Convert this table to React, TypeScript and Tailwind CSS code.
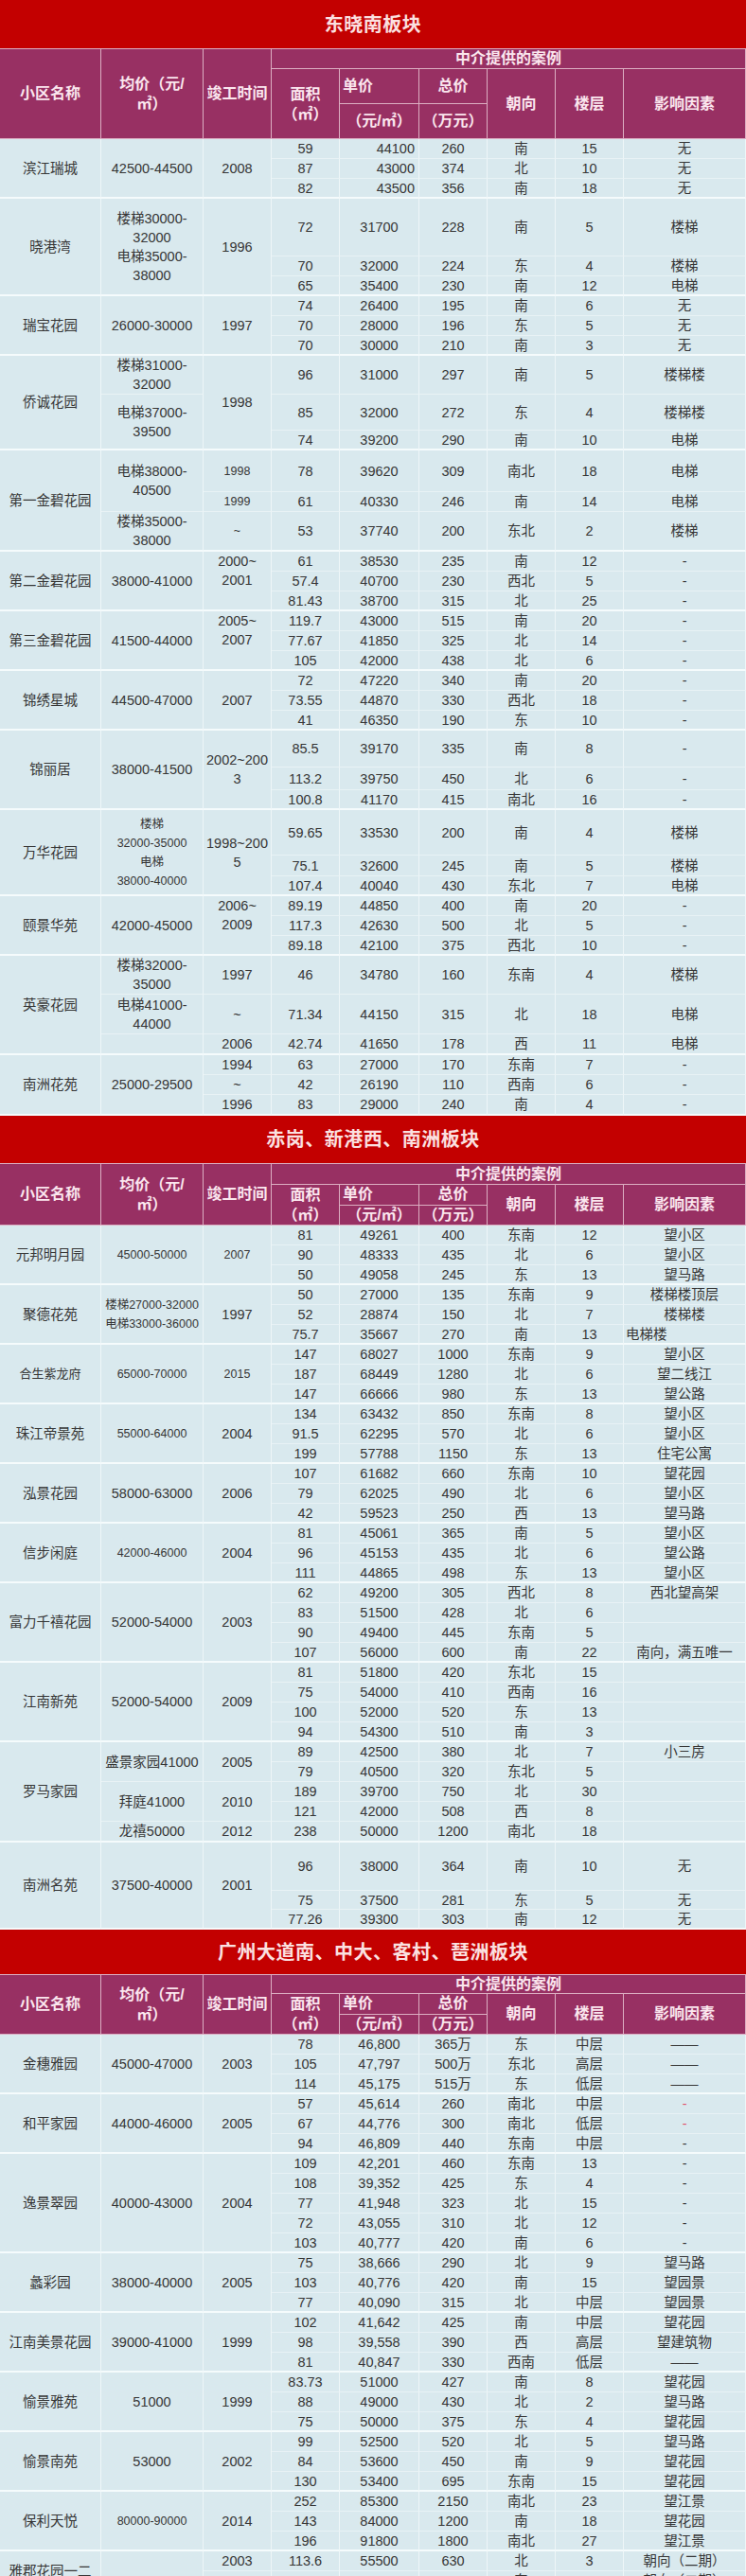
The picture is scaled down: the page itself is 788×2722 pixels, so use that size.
import React from "react";

type Row = [number, string, string, string, string, string, string?];
type Span = { n: number; lines: string[]; small?: boolean; top?: boolean };
type Group = {
  name: string[];
  nameSmall?: boolean;
  price: Span[];
  built: Span[];
  rows: Row[];
  uRight?: boolean;
  eLeft?: number[];
  eRed?: number[];
};
type Section = {
  title: string;
  titleH: number;
  head: [number, number, number];
  groups: Group[];
};

const one = (text: string, n = 3, small = false): Span[] => [{ n, lines: [text], small }];

const sections: Section[] = [
  {
    title: "东晓南板块",
    titleH: 52,
    head: [21, 37, 37],
    groups: [
      {
        name: ["滨江瑞城"],
        price: one("42500-44500"),
        built: one("2008"),
        uRight: true,
        rows: [
          [21, "59", "44100", "260", "南", "15", "无"],
          [21, "87", "43000", "374", "北", "10", "无"],
          [21, "82", "43500", "356", "南", "18", "无"],
        ],
      },
      {
        name: ["晓港湾"],
        price: [{ n: 3, lines: ["楼梯30000-", "32000", "电梯35000-", "38000"] }],
        built: one("1996"),
        rows: [
          [61, "72", "31700", "228", "南", "5", "楼梯"],
          [21, "70", "32000", "224", "东", "4", "楼梯"],
          [21, "65", "35400", "230", "南", "12", "电梯"],
        ],
      },
      {
        name: ["瑞宝花园"],
        price: one("26000-30000"),
        built: one("1997"),
        rows: [
          [21, "74", "26400", "195", "南", "6", "无"],
          [21, "70", "28000", "196", "东", "5", "无"],
          [21, "70", "30000", "210", "南", "3", "无"],
        ],
      },
      {
        name: ["侨诚花园"],
        price: [
          { n: 1, lines: ["楼梯31000-", "32000"] },
          { n: 2, lines: ["电梯37000-", "39500"] },
        ],
        built: one("1998"),
        rows: [
          [41, "96", "31000", "297", "南", "5", "楼梯楼"],
          [38, "85", "32000", "272", "东", "4", "楼梯楼"],
          [21, "74", "39200", "290", "南", "10", "电梯"],
        ],
      },
      {
        name: ["第一金碧花园"],
        price: [
          { n: 2, lines: ["电梯38000-", "40500"] },
          { n: 1, lines: ["楼梯35000-", "38000"] },
        ],
        built: [
          { n: 1, lines: ["1998"], small: true },
          { n: 1, lines: ["1999"], small: true },
          { n: 1, lines: ["~"], small: true },
        ],
        rows: [
          [44, "78", "39620", "309", "南北", "18", "电梯"],
          [21, "61", "40330", "246", "南", "14", "电梯"],
          [42, "53", "37740", "200", "东北", "2", "楼梯"],
        ],
      },
      {
        name: ["第二金碧花园"],
        price: one("38000-41000"),
        built: [{ n: 3, lines: ["2000~", "2001"], top: true }],
        rows: [
          [21, "61", "38530", "235", "南", "12", "-"],
          [21, "57.4", "40700", "230", "西北", "5", "-"],
          [21, "81.43", "38700", "315", "北", "25", "-"],
        ],
      },
      {
        name: ["第三金碧花园"],
        price: one("41500-44000"),
        built: [{ n: 3, lines: ["2005~", "2007"], top: true }],
        rows: [
          [21, "119.7", "43000", "515", "南", "20", "-"],
          [21, "77.67", "41850", "325", "北", "14", "-"],
          [21, "105", "42000", "438", "北", "6", "-"],
        ],
      },
      {
        name: ["锦绣星城"],
        price: one("44500-47000"),
        built: one("2007"),
        rows: [
          [21, "72", "47220", "340", "南", "20", "-"],
          [21, "73.55", "44870", "330", "西北", "18", "-"],
          [21, "41", "46350", "190", "东", "10", "-"],
        ],
      },
      {
        name: ["锦丽居"],
        price: one("38000-41500"),
        built: [{ n: 3, lines: ["2002~200", "3"] }],
        rows: [
          [39, "85.5", "39170", "335", "南", "8", "-"],
          [24, "113.2", "39750", "450", "北", "6", "-"],
          [21, "100.8", "41170", "415", "南北", "16", "-"],
        ],
      },
      {
        name: ["万华花园"],
        price: [{ n: 3, lines: ["楼梯", "32000-35000", "电梯", "38000-40000"], small: true }],
        built: [{ n: 3, lines: ["1998~200", "5"] }],
        rows: [
          [48, "59.65", "33530", "200", "南", "4", "楼梯"],
          [22, "75.1", "32600", "245", "南", "5", "楼梯"],
          [21, "107.4", "40040", "430", "东北", "7", "电梯"],
        ],
      },
      {
        name: ["颐景华苑"],
        price: one("42000-45000"),
        built: [{ n: 3, lines: ["2006~", "2009"], top: true }],
        rows: [
          [21, "89.19", "44850", "400", "南", "20", "-"],
          [21, "117.3", "42630", "500", "北", "5", "-"],
          [21, "89.18", "42100", "375", "西北", "10", "-"],
        ],
      },
      {
        name: ["英豪花园"],
        price: [
          { n: 1, lines: ["楼梯32000-", "35000"] },
          { n: 1, lines: ["电梯41000-", "44000"] },
          { n: 1, lines: [] },
        ],
        built: [
          { n: 1, lines: ["1997"] },
          { n: 1, lines: ["~"] },
          { n: 1, lines: ["2006"] },
        ],
        rows: [
          [41, "46", "34780", "160", "东南", "4", "楼梯"],
          [42, "71.34", "44150", "315", "北", "18", "电梯"],
          [21, "42.74", "41650", "178", "西", "11", "电梯"],
        ],
      },
      {
        name: ["南洲花苑"],
        price: one("25000-29500"),
        built: [
          { n: 1, lines: ["1994"] },
          { n: 1, lines: ["~"] },
          { n: 1, lines: ["1996"] },
        ],
        rows: [
          [21, "63", "27000", "170", "东南", "7", "-"],
          [21, "42", "26190", "110", "西南", "6", "-"],
          [21, "83", "29000", "240", "南", "4", "-"],
        ],
      },
    ],
  },
  {
    title: "赤岗、新港西、南洲板块",
    titleH: 51,
    head: [22, 21, 21],
    groups: [
      {
        name: ["元邦明月园"],
        price: one("45000-50000", 3, true),
        built: one("2007", 3, true),
        rows: [
          [21, "81", "49261", "400", "东南", "12", "望小区"],
          [21, "90", "48333", "435", "北", "6", "望小区"],
          [21, "50", "49058", "245", "东", "13", "望马路"],
        ],
      },
      {
        name: ["聚德花苑"],
        price: [{ n: 3, lines: ["楼梯27000-32000", "电梯33000-36000"], small: true }],
        built: one("1997"),
        eLeft: [2],
        rows: [
          [21, "50", "27000", "135", "东南", "9", "楼梯楼顶层"],
          [21, "52", "28874", "150", "北", "7", "楼梯楼"],
          [21, "75.7", "35667", "270", "南", "13", "电梯楼"],
        ],
      },
      {
        name: ["合生紫龙府"],
        nameSmall: true,
        price: one("65000-70000", 3, true),
        built: one("2015", 3, true),
        rows: [
          [21, "147", "68027", "1000", "东南", "9", "望小区"],
          [21, "187", "68449", "1280", "北", "6", "望二线江"],
          [21, "147", "66666", "980", "东", "13", "望公路"],
        ],
      },
      {
        name: ["珠江帝景苑"],
        price: one("55000-64000", 3, true),
        built: one("2004"),
        rows: [
          [21, "134", "63432", "850", "东南", "8", "望小区"],
          [21, "91.5", "62295", "570", "北", "6", "望小区"],
          [21, "199", "57788", "1150", "东", "13", "住宅公寓"],
        ],
      },
      {
        name: ["泓景花园"],
        price: one("58000-63000"),
        built: one("2006"),
        rows: [
          [21, "107", "61682", "660", "东南", "10", "望花园"],
          [21, "79", "62025", "490", "北", "6", "望小区"],
          [21, "42", "59523", "250", "西", "13", "望马路"],
        ],
      },
      {
        name: ["信步闲庭"],
        price: one("42000-46000", 3, true),
        built: one("2004"),
        rows: [
          [21, "81", "45061", "365", "南", "5", "望小区"],
          [21, "96", "45153", "435", "北", "6", "望公路"],
          [21, "111", "44865", "498", "东", "13", "望小区"],
        ],
      },
      {
        name: ["富力千禧花园"],
        price: one("52000-54000", 4),
        built: one("2003", 4),
        rows: [
          [21, "62", "49200", "305", "西北", "8", "西北望高架"],
          [21, "83", "51500", "428", "北", "6", ""],
          [21, "90", "49400", "445", "东南", "5", ""],
          [21, "107", "56000", "600", "南", "22", "南向，满五唯一"],
        ],
      },
      {
        name: ["江南新苑"],
        price: one("52000-54000", 4),
        built: one("2009", 4),
        rows: [
          [21, "81", "51800", "420", "东北", "15", ""],
          [21, "75", "54000", "410", "西南", "16", ""],
          [21, "100", "52000", "520", "东", "13", ""],
          [21, "94", "54300", "510", "南", "3", ""],
        ],
      },
      {
        name: ["罗马家园"],
        price: [
          { n: 2, lines: ["盛景家园41000"] },
          { n: 2, lines: ["拜庭41000"] },
          { n: 1, lines: ["龙禧50000"] },
        ],
        built: [
          { n: 2, lines: ["2005"] },
          { n: 2, lines: ["2010"] },
          { n: 1, lines: ["2012"] },
        ],
        rows: [
          [21, "89", "42500", "380", "北", "7", "小三房"],
          [21, "79", "40500", "320", "东北", "5", ""],
          [21, "189", "39700", "750", "北", "30", ""],
          [21, "121", "42000", "508", "西", "8", ""],
          [21, "238", "50000", "1200", "南北", "18", ""],
        ],
      },
      {
        name: ["南洲名苑"],
        price: one("37500-40000"),
        built: one("2001"),
        rows: [
          [51, "96", "38000", "364", "南", "10", "无"],
          [20, "75", "37500", "281", "东", "5", "无"],
          [21, "77.26", "39300", "303", "南", "12", "无"],
        ],
      },
    ],
  },
  {
    title: "广州大道南、中大、客村、琶洲板块",
    titleH: 48,
    head: [20, 21, 21],
    groups: [
      {
        name: ["金穗雅园"],
        price: one("45000-47000"),
        built: one("2003"),
        rows: [
          [21, "78", "46,800", "365万", "东", "中层", "——"],
          [21, "105", "47,797", "500万", "东北", "高层", "——"],
          [21, "114", "45,175", "515万", "东", "低层", "——"],
        ],
      },
      {
        name: ["和平家园"],
        price: one("44000-46000"),
        built: one("2005"),
        eRed: [0, 1],
        rows: [
          [21, "57", "45,614", "260", "南北", "中层", "-"],
          [21, "67", "44,776", "300", "南北", "低层", "-"],
          [21, "94", "46,809", "440", "东南", "中层", "-"],
        ],
      },
      {
        name: ["逸景翠园"],
        price: one("40000-43000", 5),
        built: one("2004", 5),
        rows: [
          [21, "109", "42,201", "460", "东南", "13", "-"],
          [21, "108", "39,352", "425", "东", "4", "-"],
          [21, "77", "41,948", "323", "北", "15", "-"],
          [21, "72", "43,055", "310", "北", "12", "-"],
          [21, "103", "40,777", "420", "南", "6", "-"],
        ],
      },
      {
        name: ["蠡彩园"],
        price: one("38000-40000"),
        built: one("2005"),
        rows: [
          [21, "75", "38,666", "290", "北", "9", "望马路"],
          [21, "103", "40,776", "420", "南", "15", "望园景"],
          [21, "77", "40,090", "315", "北", "中层", "望园景"],
        ],
      },
      {
        name: ["江南美景花园"],
        price: one("39000-41000"),
        built: one("1999"),
        rows: [
          [21, "102", "41,642", "425", "南", "中层", "望花园"],
          [21, "98", "39,558", "390", "西", "高层", "望建筑物"],
          [21, "81", "40,847", "330", "西南", "低层", "——"],
        ],
      },
      {
        name: ["愉景雅苑"],
        price: one("51000"),
        built: one("1999"),
        rows: [
          [21, "83.73", "51000", "427", "南", "8", "望花园"],
          [21, "88", "49000", "430", "北", "2", "望马路"],
          [21, "75", "50000", "375", "东", "4", "望花园"],
        ],
      },
      {
        name: ["愉景南苑"],
        price: one("53000"),
        built: one("2002"),
        rows: [
          [21, "99", "52500", "520", "北", "5", "望马路"],
          [21, "84", "53600", "450", "南", "9", "望花园"],
          [21, "130", "53400", "695", "东南", "15", "望花园"],
        ],
      },
      {
        name: ["保利天悦"],
        price: one("80000-90000", 3, true),
        built: one("2014"),
        rows: [
          [21, "252", "85300", "2150", "南北", "23", "望江景"],
          [21, "143", "84000", "1200", "南", "18", "望花园"],
          [21, "196", "91800", "1800", "南北", "27", "望江景"],
        ],
      },
      {
        name: ["雅郡花园一二", "期"],
        price: one("56000-63000"),
        built: [
          { n: 1, lines: ["2003"] },
          { n: 2, lines: [] },
        ],
        rows: [
          [21, "113.6", "55500", "630", "北", "3", "朝向（二期）"],
          [21, "120", "58000", "700", "东", "5", "朝向（二期）"],
          [21, "", "", "", "", "", ""],
        ],
      },
    ],
  },
];

const headCell =
  "p-0 text-center align-middle border-r border-b border-[#dcaec2] font-bold text-[16px] leading-[18px] text-[#fbe6ee]";

function bottom(last: boolean) {
  return last ? "border-b-2 border-b-[#f5fbfc]" : "border-b border-b-[#e8f2f5]";
}

function SpanCell({ s, last }: { s: Span; last: boolean }) {
  return (
    <td
      rowSpan={s.n}
      className={`p-0 text-center border-r border-r-[#eef6f8] leading-[20px] ${bottom(last)} ${
        s.top ? "align-top" : "align-middle"
      } ${s.small ? "text-[12.5px]" : "text-[14.5px]"}`}
    >
      {s.lines.map((l, i) => (
        <div key={i}>{l}</div>
      ))}
    </td>
  );
}

function Header({ s }: { s: Section }) {
  return (
    <>
      <tr style={{ height: s.titleH }}>
        <td
          colSpan={9}
          className="p-0 text-center align-middle bg-[#c30000] border-b border-[#dcaec2] text-[20px] leading-[24px] font-bold text-[#fbe0e0] tracking-[0.5px]"
        >
          {s.title}
        </td>
      </tr>
      <tr style={{ height: s.head[0] }} className="bg-[#983063]">
        <td rowSpan={3} className={headCell}>
          小区名称
        </td>
        <td rowSpan={3} className={`${headCell} !leading-[21px]`}>
          <div>均价（元/</div>
          <div>㎡）</div>
        </td>
        <td rowSpan={3} className={headCell}>
          竣工时间
        </td>
        <td colSpan={6} className={headCell}>
          中介提供的案例
        </td>
      </tr>
      <tr style={{ height: s.head[1] }} className="bg-[#983063]">
        <td rowSpan={2} className={`${headCell} !leading-[21px]`}>
          <div>面积</div>
          <div>（㎡）</div>
        </td>
        <td className={`${headCell} !text-left pl-[3px]`}>单价</td>
        <td className={headCell}>总价</td>
        <td rowSpan={2} className={headCell}>
          朝向
        </td>
        <td rowSpan={2} className={headCell}>
          楼层
        </td>
        <td rowSpan={2} className={headCell}>
          影响因素
        </td>
      </tr>
      <tr style={{ height: s.head[2] }} className="bg-[#983063]">
        <td className={headCell}>（元/㎡）</td>
        <td className={headCell}>（万元）</td>
      </tr>
    </>
  );
}

function GroupRows({ g }: { g: Group }) {
  const n = g.rows.length;
  const startMap = (spans: Span[]) => {
    const m: Record<number, Span> = {};
    let acc = 0;
    spans.forEach((sp) => {
      m[acc] = sp;
      acc += sp.n;
    });
    return m;
  };
  const pm = startMap(g.price);
  const bm = startMap(g.built);

  return (
    <>
      {g.rows.map((r, i) => {
        const last = i === n - 1;
        const c = `p-0 text-center align-middle border-r border-r-[#eef6f8] leading-[18px] text-[14.5px] ${bottom(last)}`;
        const p = pm[i];
        const b = bm[i];
        return (
          <tr key={i} style={{ height: r[0] }}>
            {i === 0 && (
              <td
                rowSpan={n}
                className={`p-0 text-center align-middle border-r border-r-[#eef6f8] leading-[20px] ${bottom(true)} ${
                  g.nameSmall ? "text-[13px]" : "text-[14.5px]"
                }`}
              >
                {g.name.map((l, k) => (
                  <div key={k}>{l}</div>
                ))}
              </td>
            )}
            {p && <SpanCell s={p} last={i + p.n === n} />}
            {b && <SpanCell s={b} last={i + b.n === n} />}
            <td className={c}>{r[1]}</td>
            <td className={`${c} ${g.uRight ? "!text-right pr-[4px]" : ""}`}>{r[2]}</td>
            <td className={c}>{r[3]}</td>
            <td className={c}>{r[4]}</td>
            <td className={c}>{r[5]}</td>
            <td
              className={`${c} ${g.eLeft?.includes(i) ? "!text-left pl-[2px]" : ""} ${
                g.eRed?.includes(i) ? "text-[#e0506a]" : ""
              }`}
            >
              {r[6]}
            </td>
          </tr>
        );
      })}
    </>
  );
}

export default function App() {
  return (
    <div className="w-[788px] h-[2722px] overflow-hidden bg-[#d9e9ee] font-['Liberation_Sans','Noto_Sans_CJK_SC',sans-serif] text-[#363636]">
      <table className="w-[788px] table-fixed border-separate border-spacing-0">
        <colgroup>
          <col className="w-[107px]" />
          <col className="w-[108px]" />
          <col className="w-[72px]" />
          <col className="w-[72px]" />
          <col className="w-[84px]" />
          <col className="w-[72px]" />
          <col className="w-[72px]" />
          <col className="w-[72px]" />
          <col className="w-[129px]" />
        </colgroup>
        <tbody>
          {sections.map((s, si) => (
            <React.Fragment key={si}>
              <Header s={s} />
              {s.groups.map((g, gi) => (
                <GroupRows key={gi} g={g} />
              ))}
            </React.Fragment>
          ))}
        </tbody>
      </table>
    </div>
  );
}
